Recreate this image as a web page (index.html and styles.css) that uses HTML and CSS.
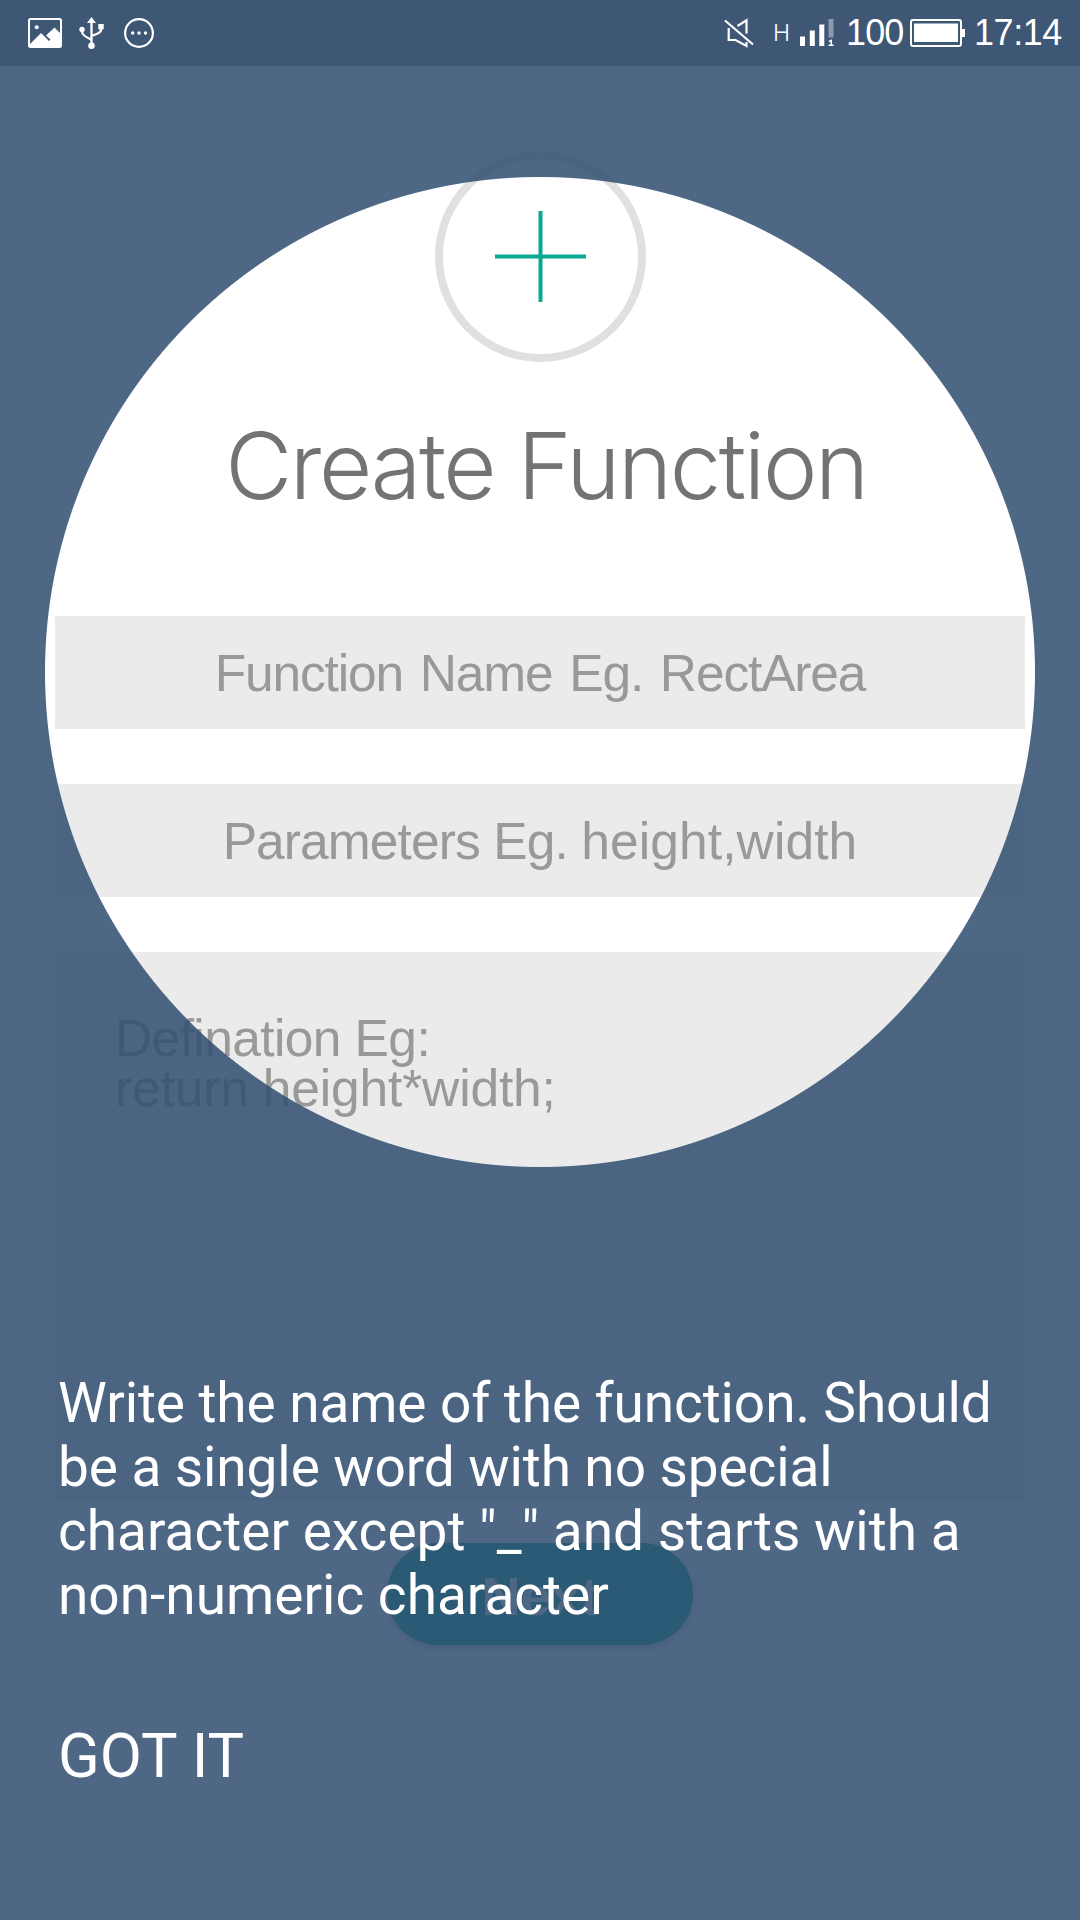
FILE: index.html
```html
<!DOCTYPE html>
<html lang="en">
<head>
<meta charset="utf-8">
<title>Create Function</title>
<link rel="stylesheet" href="styles.css">
</head>
<body>
<div class="screen">
  <header class="status">
    <div class="status-left">
      <svg width="34" height="30" viewBox="0 0 34 30"><rect x="1" y="1" width="32" height="28" rx="1.5" fill="none" stroke="#fff" stroke-width="2"/><circle cx="8.7" cy="9.2" r="2" fill="#fff"/><path d="M2 26 L13 15 L21 23 L22.5 21.5 L18 17.5 L26.5 9.5 L33 16 V29 H2Z" fill="#fff"/></svg>
      <svg width="26" height="32" viewBox="0 0 26 32"><path d="M12.5 5V28M3.2 12V15.500Q3.500 18.500 12 22.500M22 9V13Q22 16 12.700 18.800" fill="none" stroke="#fff" stroke-width="2.300"/><path d="M12.500 0L17 6H8Z" fill="#fff"/><circle cx="12.500" cy="28.700" r="3.300" fill="#fff"/><circle cx="3" cy="12.500" r="2.700" fill="#fff"/><rect x="19.300" y="7" width="5.400" height="5.400" fill="#fff"/></svg>
      <svg class="chat" width="30" height="30" viewBox="0 0 30 30"><circle cx="15" cy="15" r="13.900" fill="none" stroke="#fff" stroke-width="2.200"/><circle cx="8.700" cy="15" r="1.700" fill="#fff"/><circle cx="15" cy="15" r="1.700" fill="#fff"/><circle cx="21.500" cy="15" r="1.700" fill="#fff"/></svg>
    </div>
    <div class="status-right">
      <svg class="mute" width="30" height="30" viewBox="0 0 30 30" fill="none" stroke="#fff" stroke-width="2.200"><path d="M1 2.500L29 26.500M13.500 8L22.500 2.300V15.500M4.700 10V22H11.500L22.500 28V24"/></svg>
      <span class="net">H</span>
      <svg class="signal" width="34" height="28" viewBox="0 0 34 28"><path d="M0 17.500h5V27H0zM9.800 11.500h5V27h-5zM19.300 5.500h5V27h-5z" fill="#fff"/><path d="M28.500 0h5v18.500h-5z" fill="#fff" opacity=".4"/><path d="M29 22.500L31.300 21.500V26M28.500 26.200H33.500" fill="none" stroke="#fff" stroke-width="1.500"/></svg>
      <span class="level">100</span>
      <svg class="battery" width="56" height="28" viewBox="0 0 56 28"><rect x="1" y="1" width="50" height="26" rx="2" fill="none" stroke="#fff" stroke-width="2"/><rect x="4" y="4.500" width="44" height="18.500" fill="#fff"/><path d="M52 10h3v8h-3z" fill="#fff"/></svg>
      <span class="clock">17:14</span>
    </div>
  </header>
  <main class="form">
    <div class="add"><svg width="91" height="91" viewBox="0 0 91 91"><path d="M45.500 0V91M0 45.500H91" stroke="#0aa892" stroke-width="4"/></svg></div>
    <h1 class="title">Create Function</h1>
    <div class="field"><span class="name-hint">Function Name Eg. RectArea</span></div>
    <div class="field"><span class="param-hint">Parameters Eg. <span class="param-example">height,width</span></span></div>
    <div class="area"><span class="def-hint">Defination Eg:</span><br><span class="body-hint">return height*width;</span></div>
    <div class="next">Next</div>
  </main>
  <section class="overlay">
    <p class="message"><span class="snug">Write the name of the function. Should<br>be a single word with no special</span><br>character except "_" and starts with a<br>non-numeric character</p>
    <div class="dismiss">GOT IT</div>
  </section>
</div>
</body>
</html>
```
FILE: styles.css
```css
* { box-sizing: border-box; }
body { margin: 0; background: #fff; }
.screen {
  position: relative;
  width: 1080px;
  height: 1920px;
  overflow: hidden;
  font-family: "Liberation Sans", sans-serif;
}
.status {
  position: relative;
  z-index: 2;
  display: flex;
  justify-content: space-between;
  height: 66px;
  padding: 0 18px 0 28px;
  background: #3d5775;
  color: #fff;
}
.status-left, .status-right { display: flex; align-items: center; }
.status-left { gap: 17px; }
.chat { margin-left: 2px; }
.status-right { font-size: 36px; line-height: 70px; }
.mute { margin-right: 19px; }
.net { width: 27px; font-family: Inter, sans-serif; font-size: 23px; font-weight: 300; }
.signal { margin-right: 12px; }
.level { width: 64px; letter-spacing: -0.8px; }
.battery { margin-right: 8px; }
.clock { letter-spacing: -0.4px; }

.form { display: flex; flex-direction: column; align-items: center; padding: 85px 55px 0; }
.add {
  display: flex;
  align-items: center;
  justify-content: center;
  width: 211px;
  height: 211px;
  margin-left: 1px;
  padding-bottom: 1px;
  border: 8.5px solid #e0e0e0;
  border-radius: 50%;
}
.title {
  margin: 41px 0 87px;
  padding-left: 12px;
  font-family: Inter, sans-serif;
  font-size: 92px;
  line-height: 126px;
  font-weight: 300;
  color: #737373;
  letter-spacing: -2.4px;
  white-space: nowrap;
}
.field {
  display: flex;
  align-items: center;
  justify-content: center;
  width: 970px;
  height: 113px;
  margin-bottom: 55px;
  padding-top: 1px;
  background: #ebebeb;
}
.field, .area { color: #999; font-size: 51.5px; line-height: 50px; }
.name-hint { letter-spacing: -1.15px; word-spacing: 3.6px; }
.param-hint { letter-spacing: -0.9px; }
.param-example { letter-spacing: 0.1px; }
.def-hint { letter-spacing: -0.6px; }
.body-hint { letter-spacing: -0.15px; }
.area { width: 970px; height: 550px; padding: 61px 60px; background: #ebebeb; }
.next {
  width: 306px;
  height: 102px;
  margin-top: 41px;
  border-radius: 51px;
  background: #0aa08e;
  box-shadow: 0 3px 6px rgba(0, 0, 0, 0.25);
  color: #fff;
  font-size: 54px;
  font-weight: 700;
  line-height: 107px;
  text-align: center;
}

/* Coach mark: tinted scrim with a circular spotlight */
.overlay {
  position: absolute;
  inset: 0;
  padding: 1371px 58px 0;
  background: radial-gradient(circle at 540px 672px, transparent 494.5px, rgba(48, 78, 113, 0.86) 495.5px);
  color: #fff;
  font-family: Roboto, sans-serif;
}
.message { margin: 0; font-size: 55px; line-height: 64px; white-space: nowrap; }
.snug { letter-spacing: -0.1px; }
.dismiss { margin-top: 89px; font-size: 61.3px; line-height: 80px; }
```
